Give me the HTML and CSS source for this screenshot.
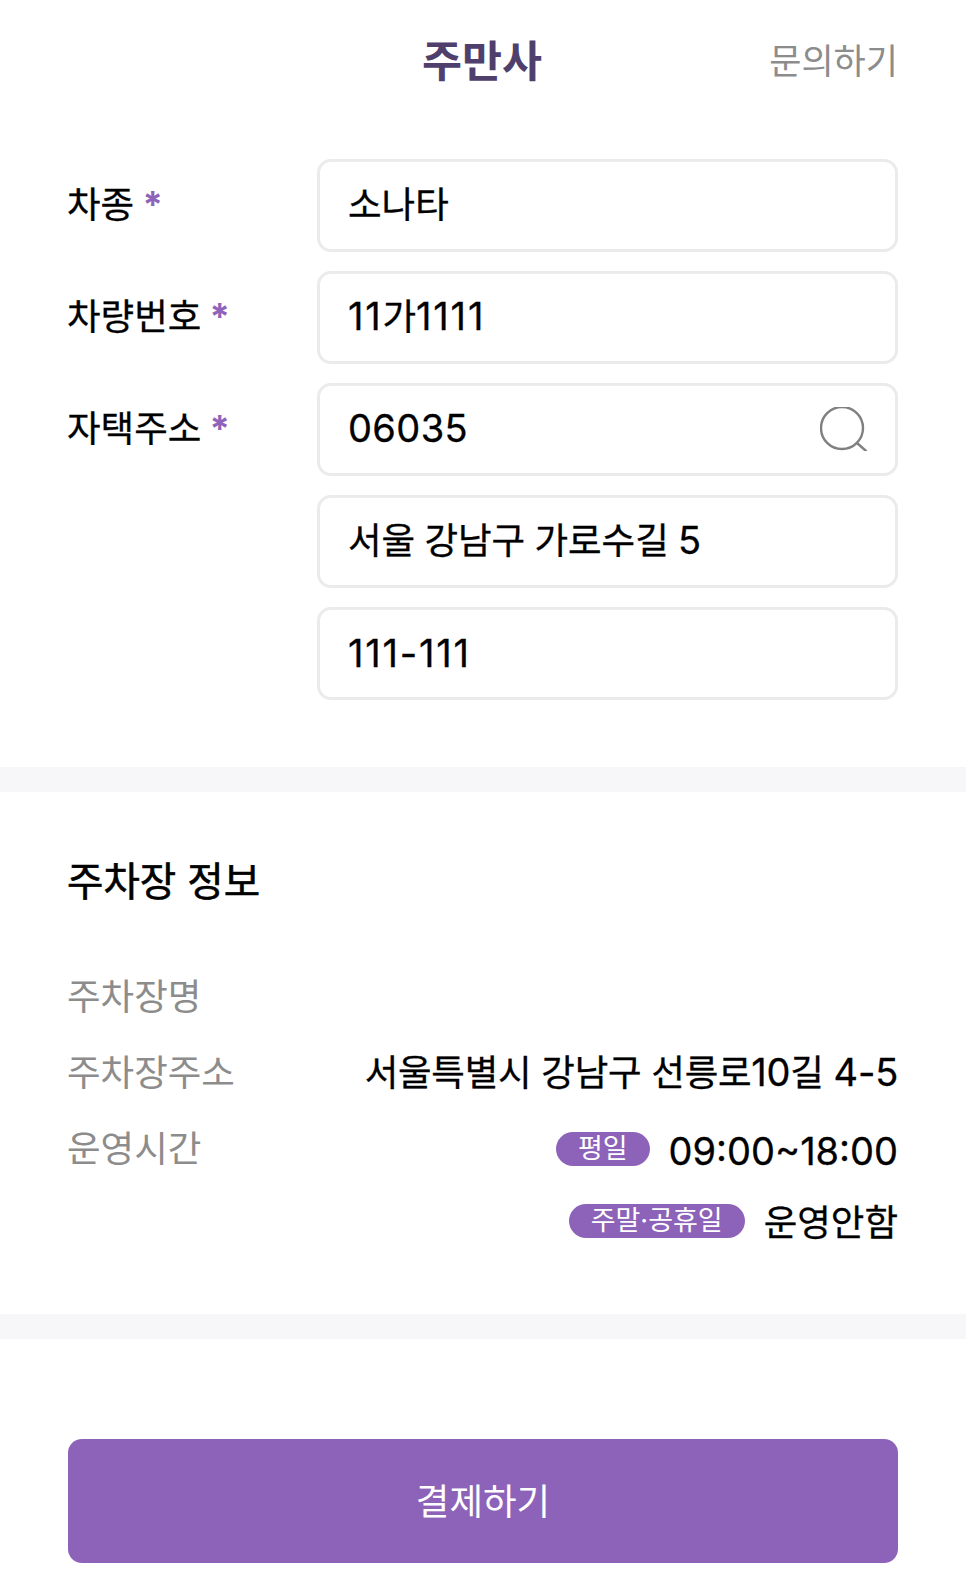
FILE: index.html
```html
<!DOCTYPE html>
<html lang="ko">
<head>
  <meta charset="UTF-8" />
  <meta name="viewport" content="width=device-width, initial-scale=1.0"/>
  <title>주만사</title>
  <link rel="stylesheet" href="styles.css">
</head>
<body>
  <header class="header">
    <h1 class="title">주만사</h1>
    <a class="inquiry">문의하기</a>
  </header>

  <section class="form">
    <div class="form-row">
      <label class="label">차종 <span class="required">*</span></label>
      <div class="fields">
        <div class="field"><span>소나타</span></div>
      </div>
    </div>
    <div class="form-row">
      <label class="label">차량번호 <span class="required">*</span></label>
      <div class="fields">
        <div class="field"><span><span class="num ones">11</span>가<span class="num ones">1111</span></span></div>
      </div>
    </div>
    <div class="form-row">
      <label class="label">자택주소 <span class="required">*</span></label>
      <div class="fields">
        <div class="field">
          <span class="num zip">06035</span>
          <svg class="search-icon" viewBox="0 0 48 44" width="48" height="44">
            <circle cx="22" cy="21" r="21" fill="none" stroke="#808080" stroke-width="2.4"/>
            <path d="M37 36l9 8" fill="none" stroke="#808080" stroke-width="2.4" stroke-linecap="round"/>
          </svg>
        </div>
        <div class="field"><span class="address">서울 강남구 가로수길 <span class="num">5</span></span></div>
        <div class="field"><span class="num ones">111-111</span></div>
      </div>
    </div>
  </section>

  <div class="divider"></div>

  <section class="parking">
    <h2 class="parking-title">주차장 정보</h2>
    <dl class="info">
      <div class="info-row">
        <dt>주차장명</dt>
        <dd></dd>
      </div>
      <div class="info-row">
        <dt>주차장주소</dt>
        <dd><span class="street">서울특별시 강남구 선릉로<span class="num">10</span>길 <span class="num">4-5</span></span></dd>
      </div>
      <div class="info-row info-row-hours">
        <dt>운영시간</dt>
        <dd><span class="badge">평일</span><span class="num">09:00~18:00</span></dd>
      </div>
      <div class="info-row info-row-last">
        <dt></dt>
        <dd><span class="badge">주말·공휴일</span>운영안함</dd>
      </div>
    </dl>
  </section>

  <div class="divider"></div>

  <div class="footer">
    <button class="pay">결제하기</button>
  </div>
</body>
</html>
```
FILE: styles.css
```css
* {
  box-sizing: border-box;
  font-family: Inter, 'Noto Sans CJK KR', sans-serif;
}

html, body {
  margin: 0;
  padding: 0;
  background-color: #ffffff;
}

body {
  height: 1594px;
  overflow: hidden;
  color: #000;
}

.header {
  position: relative;
  height: 122px;
  padding: 0 2px 6px 0;
  display: flex;
  align-items: center;
  justify-content: center;
}

.title {
  margin: 0;
  font-size: 43.5px;
  font-weight: 700;
  color: #4f3f6d;
}

.inquiry {
  position: absolute;
  right: 68px;
  top: 36px;
  line-height: 50px;
  font-size: 35px;
  color: #8c8c8c;
}

.form {
  padding: 37px 68px 67px 67px;
  display: flex;
  flex-direction: column;
  gap: 19.6px;
}

.form-row {
  display: flex;
}

.label {
  width: 250px;
  padding-top: 21px;
  line-height: 50px;
  font-size: 36.5px;
  -webkit-text-stroke: 0.3px #000;
}

.required {
  margin-left: -2px;
  color: #8f63ba;
  font-weight: 700;
  -webkit-text-stroke: 0;
}

.fields {
  flex: 1;
  display: flex;
  flex-direction: column;
  gap: 19.6px;
}

.field {
  height: 92.5px;
  padding: 0 27px 6px 28px;
  display: flex;
  align-items: center;
  justify-content: space-between;
  border: 3px solid #ebebeb;
  border-radius: 14px;
  font-size: 36.5px;
  -webkit-text-stroke: 0.3px #000;
}

.num {
  font-size: 38px;
  margin-top: 4px;
}

.ones {
  letter-spacing: 1.8px;
}

.zip {
  letter-spacing: 0.4px;
}

.address {
  word-spacing: -1px;
}

.street {
  letter-spacing: -0.25px;
}

.search-icon {
  margin-top: 6px;
}

.divider {
  height: 25px;
  background-color: #f7f7f9;
}

.parking {
  padding: 62px 68px 57px 67px;
}

.parking-title {
  margin: 0;
  line-height: 56px;
  font-size: 39.6px;
  font-weight: 400;
  -webkit-text-stroke: 0.6px #000;
}

.info {
  margin: 47px 0 0;
}

.info-row {
  display: flex;
  justify-content: space-between;
  align-items: center;
  height: 76px;
}

.info-row-last {
  height: 72px;
}

.info-row-hours dd {
  padding-top: 4px;
}

.info-row dt {
  font-size: 36.5px;
  color: #8c8c8c;
}

.info-row dd {
  margin: 0;
  display: flex;
  align-items: center;
  font-size: 36.5px;
  -webkit-text-stroke: 0.3px #000;
}

.badge {
  margin-right: 19px;
  padding: 0 22px;
  height: 34px;
  line-height: 33px;
  border-radius: 17px;
  background-color: #8d63b9;
  color: #fff;
  font-size: 27px;
  -webkit-text-stroke: 0;
}

.footer {
  padding: 100px 68px 0;
}

.pay {
  display: block;
  width: 100%;
  height: 124px;
  padding: 0 0 3px;
  border: none;
  border-radius: 14px;
  background-color: #8d63b9;
  color: #fff;
  font-size: 36.5px;
}
```
